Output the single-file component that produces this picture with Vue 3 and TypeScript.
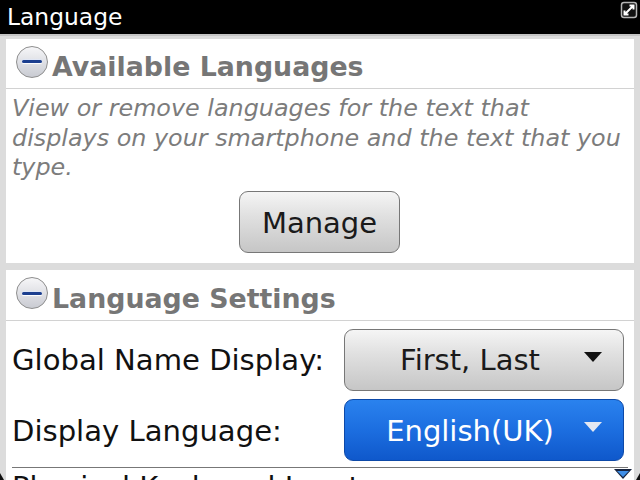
<script setup lang="ts">
const sections = ['Available Languages', 'Language Settings']
</script>

<template>
  <div class="screen">
    <header class="titlebar">
      <span class="title">Language</span>
      <svg class="expand" viewBox="0 0 18 18" width="18" height="18">
        <rect x="1.5" y="1.5" width="15" height="15" rx="2.5" fill="#111" stroke="#b5b5b5" stroke-width="1.5" />
        <path d="M4.5 13.5 L13.5 4.5 M9.5 4.5 H13.5 V8.5 M4.5 9.5 V13.5 H8.5" fill="none" stroke="#fff" stroke-width="2" />
      </svg>
    </header>
    <main class="body">
      <section class="card first">
        <div class="card-head">
          <span class="collapse"><i></i></span>
          <h2>{{ sections[0] }}</h2>
        </div>
        <p class="desc">View or remove languages for the text that<br />displays on your smartphone and the text that you<br />type.</p>
        <div class="action"><button class="btn manage">Manage</button></div>
      </section>
      <section class="card second">
        <div class="card-head">
          <span class="collapse"><i></i></span>
          <h2>{{ sections[1] }}</h2>
        </div>
        <div class="row">
          <span class="label">Global Name Display:</span>
          <button class="btn select"><span class="val">First, Last</span><b class="arrow"></b></button>
        </div>
        <div class="row two">
          <span class="label">Display Language:</span>
          <button class="btn select focus"><span class="val">English(UK)</span><b class="arrow"></b></button>
        </div>
        <div class="next">Physical Keyboard Input</div>
      </section>
    </main>
    <svg class="more" viewBox="0 0 18 10" width="18" height="10"><path d="M0 0 H18 L9 10 Z" fill="#16233f" /><path d="M3 2 H15 L9 8 Z" fill="#3f8fe8" /></svg>
    <svg class="corner left" viewBox="0 0 4 7" width="4" height="7"><path d="M0 0 L4 7 H0 Z" fill="#111" /></svg>
    <svg class="corner right" viewBox="0 0 4 7" width="4" height="7"><path d="M4 0 L0 7 H4 Z" fill="#111" /></svg>
  </div>
</template>

<style>
html, body { margin: 0; background: #d9d9d9; }
</style>

<style scoped>
.screen {
  position: relative;
  width: 640px;
  height: 480px;
  overflow: hidden;
  display: flex;
  flex-direction: column;
  font-family: "DejaVu Sans", sans-serif;
  background: #dcdcdc;
}
.titlebar {
  height: 34px;
  flex: none;
  background: #000;
  color: #fff;
  display: flex;
  justify-content: space-between;
  padding: 0 0 0 7px;
  border-bottom: 2px solid #c4c4c4;
}
.title { font-size: 23.4px; line-height: 34px; }
.expand { margin: 1px 2px 0 0; }
.body {
  padding: 3px 6px 0;
  display: flex;
  flex-direction: column;
  gap: 7px;
  flex: 1;
  min-height: 0;
}
.card { background: #fff; flex: none; }
.first { height: 224px; }
.second { flex: 1; min-height: 0; overflow: hidden; }
.card-head {
  display: flex;
  align-items: center;
  height: 49px;
  padding-left: 10px;
  gap: 4px;
  border-bottom: 1px solid #d2d2d2;
  box-sizing: content-box;
}
.second .card-head { height: 50px; }
.collapse {
  width: 32px;
  height: 32px;
  margin-top: -4px;
  border-radius: 50%;
  box-sizing: border-box;
  border: 1px solid #8e8e8e;
  background: linear-gradient(#f6f6f8, #c9cbd2);
  display: flex;
  align-items: center;
  justify-content: center;
  flex: none;
}
.collapse i {
  display: block;
  width: 20px;
  height: 3px;
  border-radius: 2px;
  background: #1c3f8f;
  box-shadow: 0 -1px 1px #dfe6f5, 0 1px 1px #fff;
}
h2 {
  margin: 6px 0 0;
  font-size: 26.8px;
  font-weight: bold;
  color: #767676;
}
.desc {
  margin: 5px 0 0 6px;
  font-size: 23.85px;
  line-height: 29.5px;
  font-style: italic;
  color: #7c7c7c;
}
.action { display: flex; justify-content: center; margin-top: 8px; }
.btn {
  font-family: inherit;
  box-sizing: border-box;
  border-radius: 9px;
  border: 1px solid #777;
  background: linear-gradient(#f5f5f5, #e0e0e0 40%, #c6c6c6);
  color: #1a1a1a;
  padding: 0;
}
.manage { width: 161px; height: 62px; padding-top: 2px; font-size: 29px; margin-right: 1px; }
.row {
  display: flex;
  align-items: center;
  justify-content: space-between;
  height: 62px;
  margin-top: 8px;
  padding: 0 10px 0 6px;
}
.row.two { margin-top: 8px; }
.label { font-size: 29.1px; color: #111; }
.select {
  position: relative;
  width: 280px;
  height: 62px;
  font-size: 29px;
  text-align: left;
}
.val { display: block; text-align: center; padding-right: 28px; }
.focus {
  background: linear-gradient(#2a82ee, #1c6ee0 50%, #0f58cb);
  border-color: #0d49a8;
  color: #fff;
  padding-top: 2px;
}
.two .label { padding-top: 1px; }
.arrow {
  position: absolute;
  right: 21px;
  top: 22px;
  border-left: 9px solid transparent;
  border-right: 9px solid transparent;
  border-top: 10px solid #111;
}
.focus .arrow { border-top-color: #e4e8f2; }
.next {
  margin: 6px 6px 0 6px;
  border-top: 1px solid #777;
  font-size: 29px;
  color: #111;
  padding-top: 2px;
  white-space: nowrap;
}
.more { position: absolute; right: 8px; bottom: 1px; }
.corner { position: absolute; bottom: 0; }
.corner.left { left: 0; }
.corner.right { right: 0; }
</style>
